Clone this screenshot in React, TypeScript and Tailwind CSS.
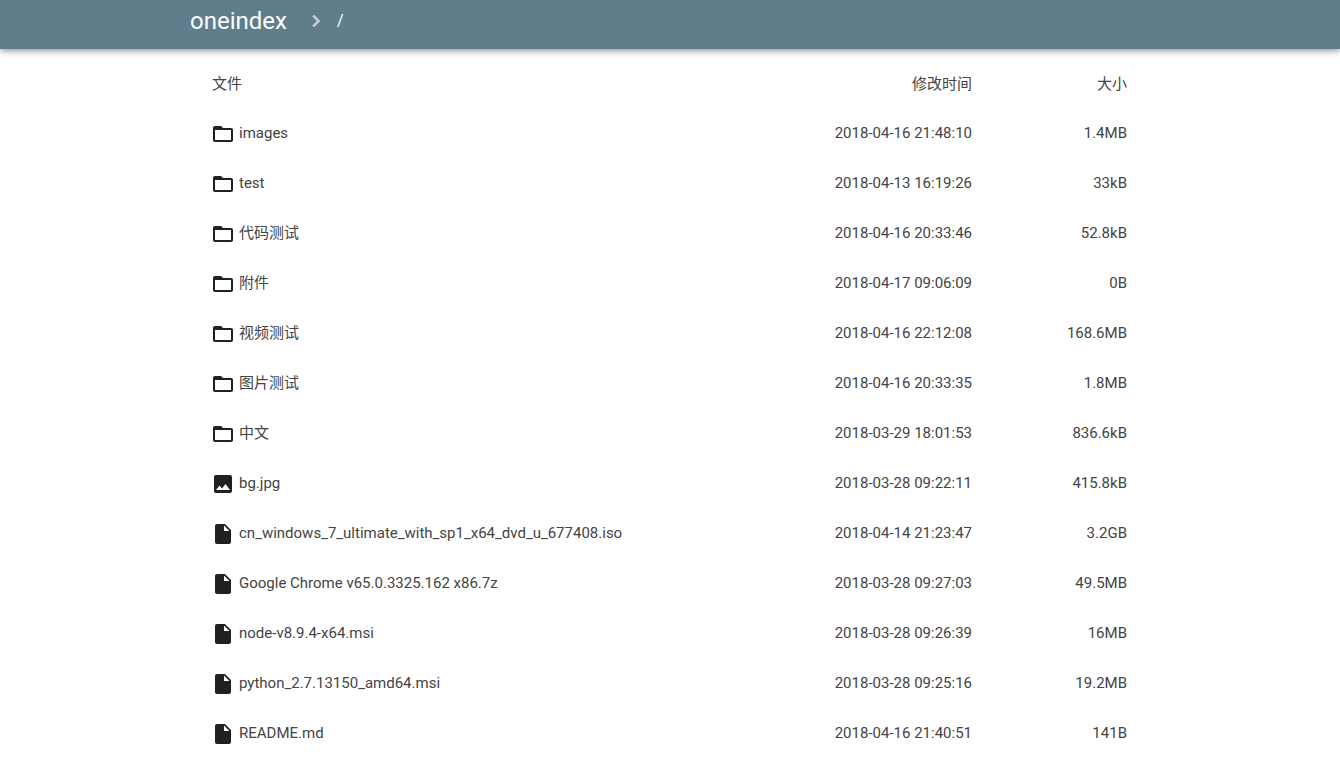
import React from 'react';

type Kind = 'folder' | 'image' | 'file';

interface Item {
  name: string;
  time: string;
  size: string;
  kind: Kind;
}

const items: Item[] = [
  { name: 'images', time: '2018-04-16 21:48:10', size: '1.4MB', kind: 'folder' },
  { name: 'test', time: '2018-04-13 16:19:26', size: '33kB', kind: 'folder' },
  { name: '代码测试', time: '2018-04-16 20:33:46', size: '52.8kB', kind: 'folder' },
  { name: '附件', time: '2018-04-17 09:06:09', size: '0B', kind: 'folder' },
  { name: '视频测试', time: '2018-04-16 22:12:08', size: '168.6MB', kind: 'folder' },
  { name: '图片测试', time: '2018-04-16 20:33:35', size: '1.8MB', kind: 'folder' },
  { name: '中文', time: '2018-03-29 18:01:53', size: '836.6kB', kind: 'folder' },
  { name: 'bg.jpg', time: '2018-03-28 09:22:11', size: '415.8kB', kind: 'image' },
  { name: 'cn_windows_7_ultimate_with_sp1_x64_dvd_u_677408.iso', time: '2018-04-14 21:23:47', size: '3.2GB', kind: 'file' },
  { name: 'Google Chrome v65.0.3325.162 x86.7z', time: '2018-03-28 09:27:03', size: '49.5MB', kind: 'file' },
  { name: 'node-v8.9.4-x64.msi', time: '2018-03-28 09:26:39', size: '16MB', kind: 'file' },
  { name: 'python_2.7.13150_amd64.msi', time: '2018-03-28 09:25:16', size: '19.2MB', kind: 'file' },
  { name: 'README.md', time: '2018-04-16 21:40:51', size: '141B', kind: 'file' },
];

const iconPaths: Record<Kind, string> = {
  folder: 'M20 6h-8l-2-2H4c-1.1 0-1.99.9-1.99 2L2 18c0 1.1.9 2 2 2h16c1.1 0 2-.9 2-2V8c0-1.1-.9-2-2-2zm0 12H4V8h16v10z',
  image: 'M21 19V5c0-1.1-.9-2-2-2H5c-1.1 0-2 .9-2 2v14c0 1.1.9 2 2 2h14c1.1 0 2-.9 2-2zM8.5 13.5l2.5 3.01L14.5 12l4.5 6H5l3.5-4.5z',
  file: 'M6 2c-1.1 0-1.99.9-1.99 2L4 20c0 1.1.89 2 1.99 2H18c1.1 0 2-.9 2-2V8l-6-6H6zm7 7V3.5L18.5 9H13z',
};

const FileIcon: React.FC<{ kind: Kind }> = ({ kind }) => (
  <svg className="w-6 h-6 shrink-0 fill-[#1f1f24] mt-px mr-[4px]" viewBox="0 0 24 24">
    <path d={iconPaths[kind]} />
  </svg>
);

const Row: React.FC<{ item: Item }> = ({ item }) => (
  <li className="flex items-center h-[50px] pl-[21px] pr-[23px] text-[15px] text-[#444]">
    <div className="flex-1 flex items-center min-w-0">
      <FileIcon kind={item.kind} />
      <span className="truncate">{item.name}</span>
    </div>
    <div className="w-[200px] text-right">{item.time}</div>
    <div className="w-[155px] text-right">{item.size}</div>
  </li>
);

export default function App() {
  return (
    <div className="min-h-[757px] bg-white overflow-hidden font-['Roboto','Noto_Sans_CJK_SC',sans-serif]">
      <header className="h-[49px] bg-[#607d8b] shadow-[0_2px_4px_-1px_rgba(0,0,0,0.2),0_4px_5px_0_rgba(0,0,0,0.14),0_1px_10px_0_rgba(0,0,0,0.12)]">
        <div className="w-[960px] mx-auto flex items-center h-[42px] text-white">
          <span className="text-[24px] font-normal">oneindex</span>
          <svg className="w-6 h-6 ml-[17px] fill-white/60 stroke-white/60 stroke-[0.6]" viewBox="0 0 24 24">
            <path d="M10 6L8.59 7.41 13.17 12l-4.58 4.59L10 18l6-6z" />
          </svg>
          <span className="ml-[9px] text-[16px]">/</span>
        </div>
      </header>
      <main className="w-[960px] mx-auto pt-[9px]">
        <div className="flex items-center h-[50px] pl-[22px] pr-[23px] pt-[2px] text-[15px] text-[#444]">
          <div className="flex-1">文件</div>
          <div className="w-[200px] text-right">修改时间</div>
          <div className="w-[155px] text-right">大小</div>
        </div>
        <ul>
          {items.map(item => <Row key={item.name} item={item} />)}
        </ul>
      </main>
    </div>
  );
}
